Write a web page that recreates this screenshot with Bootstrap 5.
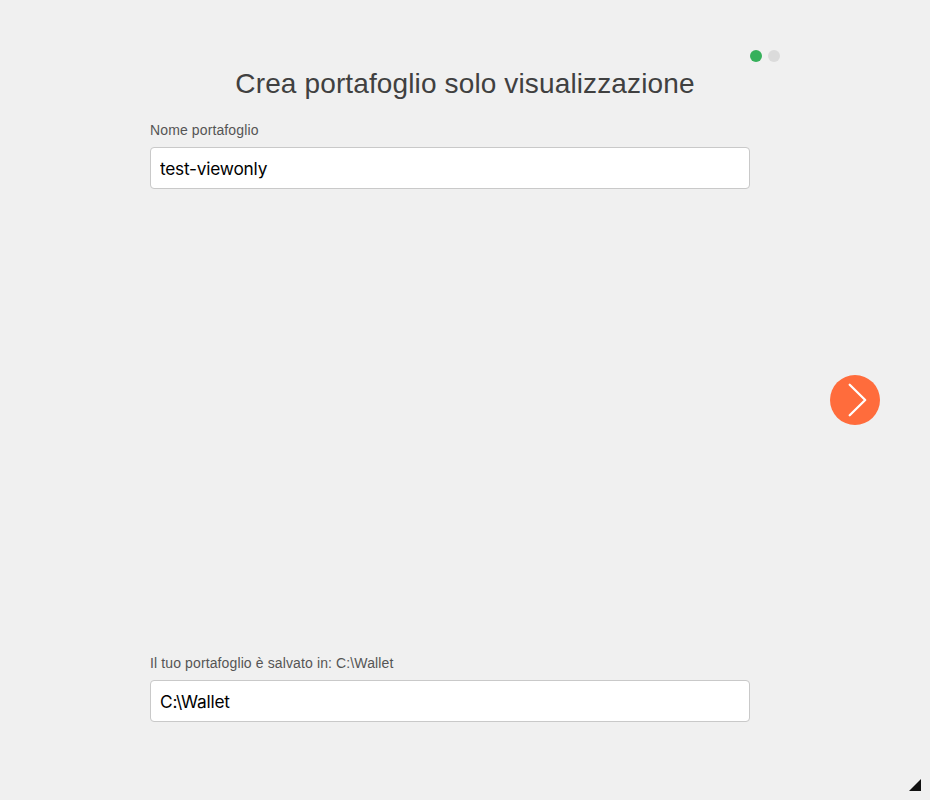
<!DOCTYPE html>
<html lang="it">
<head>
<meta charset="utf-8">
<title>Crea portafoglio</title>
<link href="https://cdn.jsdelivr.net/npm/bootstrap@5.3.0/dist/css/bootstrap.min.css" rel="stylesheet">
<style>
body{background:#f0f0f0;font-family:"Liberation Sans",Arial,sans-serif;overflow:hidden}
.wizard{padding:50px 50px 78px 150px}
.steps{width:630px;height:12px;gap:6px}
.step-dot{width:12px;height:12px;background:#dbdbdb}
.step-dot.current{background:#36b05b}
.wizard-title{width:630px;font-size:28px;line-height:32px;letter-spacing:.13px;color:#404040;margin:6px 0 22px}
.field{width:600px}
.field label{font-size:14px;line-height:16px;letter-spacing:.12px;color:#555;margin-bottom:9px;display:block}
.field .form-control{height:42px;padding:1px 9px 0;border:1px solid #c9c9c9;border-radius:4px;font-family:Inter,sans-serif;font-size:17.3px;color:#000;letter-spacing:-.22px}
.next-area{padding-bottom:44px}
.next-btn{width:50px;height:50px;background:#ff6c3c}
.grip{right:9px;bottom:9px}
</style>
</head>
<body>
<main class="wizard vh-100 d-flex flex-column position-relative">
  <div class="steps d-flex justify-content-end"><span class="step-dot current rounded-circle"></span><span class="step-dot rounded-circle"></span></div>
  <h1 class="wizard-title text-center fw-normal">Crea portafoglio solo visualizzazione</h1>
  <div class="field"><label for="name">Nome portafoglio</label><input id="name" class="form-control" value="test-viewonly"></div>
  <div class="next-area flex-grow-1 d-flex justify-content-end align-items-center">
    <button class="next-btn btn p-0 border-0 rounded-circle" aria-label="Avanti"><svg class="d-block" width="50" height="50" fill="none" stroke="#fff" stroke-width="2.3" stroke-linecap="round" stroke-linejoin="round"><path d="M19.7 9.8 35.2 25 19.7 40.2"/></svg></button>
  </div>
  <div class="field"><label for="path">Il tuo portafoglio è salvato in: C:\Wallet</label><input id="path" class="form-control" value="C:\Wallet"></div>
  <svg class="grip position-absolute" width="12" height="12" fill="#111"><path d="M12 0V12H0Z"/></svg>
</main>
<script src="https://cdn.jsdelivr.net/npm/bootstrap@5.3.0/dist/js/bootstrap.bundle.min.js"></script>
</body>
</html>
